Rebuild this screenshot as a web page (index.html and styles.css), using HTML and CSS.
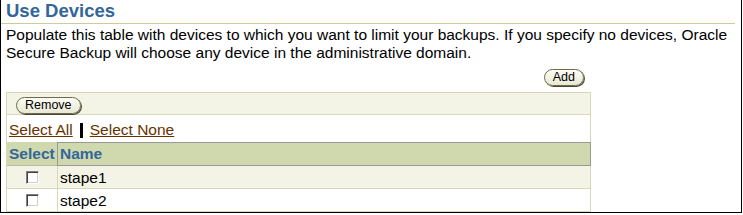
FILE: index.html
```html
<!DOCTYPE html>
<html lang="en">
<head>
  <meta charset="UTF-8" />
  <title>Use Devices</title>
  <link rel="stylesheet" href="styles.css">
</head>
<body>
  <div class="frame">
    <h1 class="page-title">Use Devices</h1>
    <p class="intro">Populate this table with devices to which you want to limit your backups. If you specify no devices, Oracle Secure Backup will choose any device in the administrative domain.</p>

    <div class="devices">
      <div class="add-row">
        <button class="btn">Add</button>
      </div>

      <div class="controls">
        <div class="toolbar">
          <button class="btn">Remove</button>
        </div>
        <div class="select-links">
          <a href="#">Select All</a><span class="sep"></span><a href="#">Select None</a>
        </div>
      </div>

      <table class="grid">
        <tr>
          <th class="col-select">Select</th>
          <th class="col-name">Name</th>
        </tr>
        <tr class="odd">
          <td class="col-select"><input type="checkbox" class="chk"></td>
          <td class="col-name">stape1</td>
        </tr>
        <tr>
          <td class="col-select"><input type="checkbox" class="chk"></td>
          <td class="col-name">stape2</td>
        </tr>
      </table>
    </div>
  </div>
</body>
</html>
```

FILE: styles.css
```css
* {
  margin: 0;
  padding: 0;
  box-sizing: border-box;
}

body {
  background: #fff;
  color: #000;
  font-family: "Liberation Sans", Arial, sans-serif;
  font-size: 15.5px;
}

.frame {
  width: 742px;
  height: 213px;
  border: 1px solid #000;
  border-top: none;
}

.page-title {
  font-size: 18.5px;
  line-height: 21px;
  font-weight: bold;
  color: #336699;
  padding: 0 0 2px 5px;
  margin-right: 6px;
  border-bottom: 1px solid #cccc99;
}

.intro {
  margin-top: 2px;
  padding-left: 5px;
  line-height: 18px;
}

.devices {
  margin-left: 5px;
  width: 585px;
}

.add-row {
  display: flex;
  justify-content: flex-end;
  padding: 7px 7px 6px 0;
}

/* rounded BLAF style buttons */
.btn {
  height: 17px;
  padding: 0 8px;
  font-family: "Liberation Sans", Arial, sans-serif;
  font-size: 12.5px;
  line-height: 15px;
  color: #000;
  background: linear-gradient(#fdfdf6, #e8e8d4);
  border: 1px solid #6b6b4c;
  border-radius: 9px;
  box-shadow: 1px 1px 0 #4a4a34;
  cursor: pointer;
}

.controls {
  border: 1px solid #d6d9b7;
  border-bottom: none;
}

.toolbar {
  height: 22px;
  padding: 2px 0 0 9px;
  background: #f3f4e5;
  border-bottom: 1px solid #d6d9b7;
}

.select-links {
  height: 27px;
  padding: 6px 0 0 2px;
  line-height: 18px;
}

.select-links a {
  color: #663300;
  text-decoration: underline;
}

.sep {
  display: inline-block;
  width: 3px;
  height: 15px;
  margin: 0 7px 0 7px;
  background: #000;
  vertical-align: -3px;
}

/* separate borders so every line lands where we put it */
.grid {
  width: 585px;
  border-collapse: separate;
  border-spacing: 0;
}

.grid th {
  padding: 2px;
  line-height: 18px;
  text-align: left;
  font-weight: bold;
  color: #336699;
  background: #d0d8ae;
}

.grid th.col-select {
  width: 51px;
  padding-top: 3px;
  border-left: 1px solid #d6d9b7;
  border-bottom: 1px solid #b8bca0;
}

.grid th.col-name {
  border: 1px solid #999;
}

.grid td {
  padding: 3px 2px 1px;
  line-height: 18px;
  border-bottom: 1px solid #d6d9b7;
}

.grid td.col-select {
  border-left: 1px solid #d6d9b7;
  vertical-align: middle;
  padding: 0;
}

.grid td.col-name {
  border-left: 1px solid #d6d9b7;
  border-right: 1px solid #d6d9b7;
}

.grid tr.odd td {
  background: #f3f4e5;
}

.chk {
  appearance: none;
  -webkit-appearance: none;
  display: block;
  margin: 0 auto;
  width: 13px;
  height: 13px;
  background: #fff;
  border: 1px solid;
  border-color: #808080 #fff #fff #808080;
  box-shadow: inset 1px 1px 0 #404040, inset -1px -1px 0 #d4d0c8;
}
```
